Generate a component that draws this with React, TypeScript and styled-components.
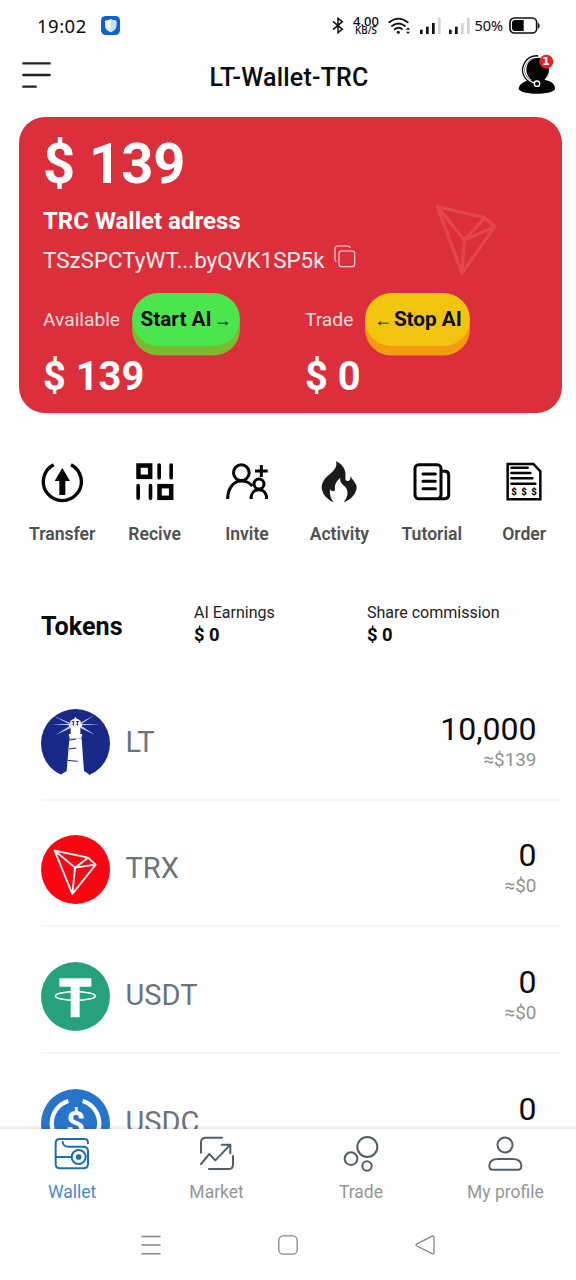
import React from 'react';
import styled, { createGlobalStyle } from 'styled-components';

const GlobalStyle = createGlobalStyle`
  *, *::before, *::after { box-sizing: border-box; }
  body { margin: 0; background: #fefefe; font-family: Roboto, "Liberation Sans", sans-serif; }
  svg { display: block; flex: none; }
`;

const Screen = styled.div`
  width: 576px;
  height: 1280px;
  display: flex;
  flex-direction: column;
  background: #fefefe;
  color: #0a0a0a;
  overflow: hidden;
`;

/* ---------- status bar ---------- */

const StatusBar = styled.div`
  height: 51px;
  flex: none;
  display: flex;
  align-items: center;
  justify-content: space-between;
  padding: 0 36px 0 37px;
`;

const StatusGroup = styled.div<{ $gap: number }>`
  display: flex;
  align-items: center;
  gap: ${(p) => p.$gap}px;
`;

const Clock = styled.span`
  font: 400 18.5px/24px "Noto Sans", sans-serif;
  letter-spacing: 0.5px;
  width: 51px;
`;

const NetSpeed = styled.div`
  display: flex;
  flex-direction: column;
  align-items: center;
  width: 27px;
  font-family: "Noto Sans", sans-serif;
  font-weight: 500;
  white-space: nowrap;
`;

const NetValue = styled.span`
  font-size: 13px;
  line-height: 10px;
`;

const NetUnit = styled.span`
  font-size: 9.8px;
  line-height: 10px;
`;

const BatteryText = styled.span`
  font: 400 14.5px/20px "Noto Sans", sans-serif;
  width: 30px;
  margin: -2px -4px 0 -4px;
  white-space: nowrap;
`;

/* ---------- header ---------- */

const Header = styled.header`
  height: 66px;
  flex: none;
  display: flex;
  align-items: flex-start;
  justify-content: space-between;
  padding: 3px 20px 0 22px;
`;

const MenuButton = styled.div`
  width: 38px;
  padding-top: 7px;
`;

const Title = styled.h1`
  margin: 0;
  font-size: 25px;
  line-height: 48px;
  letter-spacing: 0.2px;
  font-weight: 500;
`;

/* ---------- balance card ---------- */

const Card = styled.section`
  width: 543px;
  height: 296px;
  flex: none;
  margin-left: 19px;
  padding: 14px 24px 0;
  border-radius: 26px;
  background: #dc2f3c;
  color: #fff;
  position: relative;
`;

const Total = styled.div`
  font-size: 56px;
  line-height: 66px;
  font-weight: 700;
`;

const AddressLabel = styled.div`
  margin-top: 9px;
  font-size: 24px;
  line-height: 31px;
  font-weight: 700;
`;

const AddressRow = styled.div`
  display: flex;
  align-items: flex-start;
  gap: 9px;
  margin-top: 8px;
  height: 30px;
  font-size: 22.4px;
  line-height: 30px;
  color: #fdeeee;
`;

const Watermark = styled.div`
  position: absolute;
  left: 416px;
  top: 87px;
`;

const Funds = styled.div`
  display: grid;
  grid-template-columns: 262px 1fr;
  margin-top: 18.4px;
`;

const FundHead = styled.div`
  display: flex;
  align-items: flex-start;
  gap: 12px;
  height: 61.6px;
  line-height: 54px;
  font-size: 19.2px;
  color: #fbdcdc;
`;

const FundValue = styled.div`
  font-size: 39.8px;
  line-height: 43px;
  font-weight: 700;
`;

const PillButton = styled.button<{ $face: string; $edge: string; $width: number }>`
  width: ${(p) => p.$width}px;
  height: 53px;
  padding: 0;
  border: 0;
  border-radius: 28px;
  background: ${(p) => p.$face};
  box-shadow: 0 9.5px 0 ${(p) => p.$edge};
  display: flex;
  justify-content: center;
  gap: 2px;
  font: 700 20.7px/52px Roboto, sans-serif;
  color: #0a0a0a;
  white-space: nowrap;
`;

const Arrow = styled.span`
  font: 700 18px/54px "Liberation Sans", sans-serif;
`;

/* ---------- shortcuts ---------- */

const Shortcuts = styled.nav`
  display: grid;
  grid-template-columns: repeat(6, 92.4px);
  flex: none;
  margin: 48px 0 0 16px;
`;

const Shortcut = styled.div`
  display: flex;
  flex-direction: column;
  align-items: center;
  gap: 19px;
  font-size: 17.6px;
  line-height: 24px;
  font-weight: 600;
  color: #505050;
`;

/* ---------- tokens ---------- */

const Summary = styled.div`
  display: grid;
  grid-template-columns: 153px 173px 1fr;
  flex: none;
  margin: 57px 16px 0 41px;
`;

const SectionTitle = styled.h2`
  margin: 0;
  padding-top: 9px;
  font-size: 25.2px;
  line-height: 30px;
  font-weight: 700;
`;

const Stat = styled.div`
  font-size: 16px;
  line-height: 20px;
  color: #222;
`;

const StatValue = styled.div`
  font-size: 18.4px;
  line-height: 24px;
  font-weight: 700;
  color: #0a0a0a;
`;

const TokenList = styled.main`
  flex: 1;
  min-height: 0;
  overflow: hidden;
  margin: 27px 16px 0 41px;
`;

const TokenRow = styled.div`
  display: flex;
  height: 126.7px;
  padding: 34.7px 23.5px 0 0;
  border-bottom: 2px solid #f5f5f5;
`;

const TokenName = styled.div`
  flex: 1;
  margin-left: 15.5px;
  font-size: 29px;
  line-height: 67px;
  color: #6b747b;
`;

const TokenAmount = styled.div`
  display: flex;
  flex-direction: column;
  align-items: flex-end;
  font-size: 32px;
  line-height: 40px;
  color: #0a0a0a;
`;

const TokenFiat = styled.span`
  font-size: 18.9px;
  line-height: 21px;
  color: #939393;
`;

/* ---------- bottom bars ---------- */

const TabBar = styled.nav`
  flex: none;
  height: 81px;
  display: grid;
  grid-template-columns: repeat(4, 144.4px);
  padding-top: 7px;
  background: #fefefe;
  box-shadow: 0 -1px 4px rgba(0, 0, 0, 0.16);
  position: relative;
`;

const Tab = styled.div<{ $active?: boolean }>`
  display: flex;
  flex-direction: column;
  align-items: center;
  gap: 9px;
  font-size: 17.5px;
  line-height: 22px;
  color: ${(p) => (p.$active ? '#4788d0' : '#969696')};
`;

const SystemBar = styled.div`
  flex: none;
  height: 70px;
  display: flex;
  justify-content: center;
  gap: 117px;
  padding-top: 25px;
  background: #fefefe;
  position: relative;
`;

/* ---------- icons ---------- */

const ActionSvg = ({ children }: { children: React.ReactNode }) => (
  <svg width="42" height="42" viewBox="0 0 126 126" fill="none" stroke="#050505" strokeWidth="9">
    {children}
  </svg>
);

const TransferIcon = () => (
  <ActionSvg>
    <path d="M38 11A57 57 0 1 0 90 11" strokeWidth="10" />
    <path d="M64 21L87 60H73V102H55V60H41Z" fill="#050505" stroke="none" />
  </ActionSvg>
);

const ReceiveIcon = () => (
  <ActionSvg>
    <g strokeWidth="13.500">
      <rect x="13.500" y="13.500" width="35" height="34" />
      <rect x="76.500" y="75.500" width="35" height="35" />
    </g>
    <path d="M75.500 12V50M111.500 12V50M12.500 74V112M49.500 74V112" strokeWidth="11" strokeLinecap="round" />
  </ActionSvg>
);

const InviteIcon = () => (
  <ActionSvg>
    <circle cx="46" cy="35" r="23.500" />
    <path d="M5 114C5 80 24 60 46 60C62 60 72 66 79 75" />
    <circle cx="99" cy="69" r="15" />
    <path d="M75 114C75 97 85 86 99 86S122 97 122 114M106 12V48M87 30H125" />
  </ActionSvg>
);

const FlameIcon = () => (
  <ActionSvg>
    <path
      fill="#1b1b1b"
      stroke="none"
      d="M54 1C60 20 45 32 28 46C12 60 8 78 14 92C20 108 32 116 47 124C38 112 34 100 36 84C42 94 51 92 51 84C49 70 56 60 67 50C64 62 72 68 80 76C92 88 92 106 77 124C100 116 114 98 116 80C117 66 102 58 98 44C98 56 94 61 88 60C78 58 84 48 82 34C79 18 67 6 54 1Z"
    />
  </ActionSvg>
);

const TutorialIcon = () => (
  <ActionSvg>
    <rect x="12" y="11" width="78" height="102" rx="11" />
    <path d="M90 31H102Q113 31 113 42V102Q113 113 102 113H81" />
    <path d="M36 39H73M36 61H73M36 83H73" strokeLinecap="round" />
  </ActionSvg>
);

const OrderIcon = () => (
  <ActionSvg>
    <path d="M14 9H91L112 31V115H14Z" strokeWidth="7.500" />
    <path d="M25 20H74M25 36H82M25 52H88M25 68H97" strokeWidth="7.500" strokeLinecap="round" />
    <g fill="#050505" stroke="none" fontSize="29" fontWeight="900" textAnchor="middle">
      <text x="33" y="102">$</text>
      <text x="63" y="102">$</text>
      <text x="93" y="102">$</text>
    </g>
  </ActionSvg>
);

const CoinSvg = ({ color, children }: { color: string; children: React.ReactNode }) => (
  <svg width="69" height="69" viewBox="0 0 207 207" fill="none" stroke="#fff">
    <circle cx="103.500" cy="103.500" r="103.500" fill={color} stroke="none" />
    {children}
  </svg>
);

const LighthouseCoin = () => (
  <CoinSvg color="#182987">
    <g fill="#fefefe" stroke="none">
      <path d="M85 90H122L129 186L144 196V213H61V196L77 186Z" />
      <path d="M83 75H124L121 89H86Z" />
      <path d="M89 52H118V75H89Z" />
      <path d="M84 46H123V53H84Z" />
      <path d="M88 46V36Q94 30 100 29L103 23L107 29Q113 30 119 36V46Z" />
      <path d="M90 48L36 20L88 42ZM88 49L30 46L88 44ZM90 48L44 78L96 54Z" opacity="0.75" />
      <path d="M117 48L161 18L117 42ZM118 49L177 46L118 44ZM117 48L162 78L112 54Z" opacity="0.75" />
    </g>
    <path d="M92 38H100M97 38V50M105 38H114M109 38V50" stroke="#182987" strokeWidth="3" />
    <path d="M84 93L104 91M84 120L106 117M80 154L110 157" stroke="#182987" strokeWidth="3" />
  </CoinSvg>
);

const TronCoin = () => (
  <CoinSvg color="#fb0512">
    <path
      d="M41 47L141 68L164 89L94 177ZM41 47L102 98L94 177M102 98L141 68M102 98L164 89"
      strokeWidth="5.500"
      strokeLinejoin="round"
    />
  </CoinSvg>
);

const TetherCoin = () => (
  <CoinSvg color="#26a17b">
    <path d="M55 49H151V74H116V166H89V74H55Z" fill="#fff" stroke="none" />
    <ellipse cx="103" cy="102" rx="60" ry="13" strokeWidth="4.500" />
  </CoinSvg>
);

const UsdCoin = () => (
  <CoinSvg color="#2775ca">
    <path d="M82 36A70 70 0 0 0 82 170M125 36A70 70 0 0 1 125 170" strokeWidth="13" />
    <text x="103.500" y="137" fill="#fff" stroke="none" fontSize="100" fontWeight="700" textAnchor="middle">
      $
    </text>
  </CoinSvg>
);

const TabSvg = ({ color = '#535d64', children }: { color?: string; children: React.ReactNode }) => (
  <svg
    width="36"
    height="36"
    viewBox="0 0 108 108"
    fill="none"
    stroke={color}
    strokeWidth="6"
    strokeLinecap="round"
    strokeLinejoin="round"
  >
    {children}
  </svg>
);

const WalletIcon = () => (
  <TabSvg color="#1b6fae">
    <path d="M102 22C102 12 98 9 92 9H18Q5 9 5 22V84Q5 97 18 97H88Q102 97 102 84V46Q102 32 88 32H42Q27 31 26 18" />
    <path d="M5 63H52" />
    <circle cx="74" cy="63" r="21" />
    <circle cx="74" cy="63" r="8.500" fill="#1b6fae" stroke="none" />
  </TabSvg>
);

const MarketIcon = () => (
  <TabSvg>
    <path d="M6 50V19Q6 5 20 5H69M30 99H88Q102 99 102 86V60" />
    <path d="M6 84L31 54L49 73L94 26M68 26H94V52" />
  </TabSvg>
);

const TradeIcon = () => (
  <TabSvg>
    <circle cx="73" cy="33" r="30" />
    <circle cx="24" cy="68" r="19" />
    <circle cx="72" cy="90" r="14" />
  </TabSvg>
);

const ProfileIcon = () => (
  <TabSvg>
    <circle cx="54" cy="27" r="22.500" />
    <path d="M7 89Q7 69 34 69H76Q103 69 103 89Q103 101 93 101H17Q7 101 7 89Z" />
  </TabSvg>
);

const ShieldIcon = () => (
  <svg width="19" height="19" viewBox="0 0 57 57">
    <rect width="57" height="57" rx="14" fill="#1261d0" />
    <path d="M29 9C35 13 41 14 46 14V28C46 39 38 45 29 49C20 45 12 39 12 28V14C17 14 23 13 29 9Z" fill="#f4f8ff" />
    <path d="M29 9C35 13 41 14 46 14V28C46 39 38 45 29 49Z" fill="#c9dbf5" />
  </svg>
);

const BluetoothIcon = () => (
  <svg width="12" height="17" viewBox="0 0 36 51" fill="none" stroke="#111" strokeWidth="4.500">
    <path d="M3 13L31 37L18 47V4L31 14L3 38" />
  </svg>
);

const WifiIcon = () => (
  <svg width="23" height="18" viewBox="0 0 69 54" fill="none" stroke="#111" strokeWidth="5.500" strokeLinecap="round">
    <path d="M4 16Q31 -6 59 16M12 27Q31 12 51 27M20 37Q31 28 42 36" />
    <circle cx="31" cy="46" r="4.500" fill="#111" stroke="none" />
    <path d="M54 38L60 31L66 38ZM54 44L60 51L66 44Z" fill="#111" stroke="none" />
  </svg>
);

const SignalIcon = ({ level }: { level: number }) => (
  <svg width="21" height="18" viewBox="0 0 63 54" strokeWidth="8">
    {[38, 29, 18, 2].map((top, i) => (
      <path key={top} d={`M${4 + i * 18} ${top}V51`} stroke={i < level ? '#111' : '#d4d4d4'} />
    ))}
  </svg>
);

const BatteryIcon = () => (
  <svg width="31" height="17" viewBox="0 0 93 51">
    <rect x="3" y="3" width="80" height="45" rx="13" fill="none" stroke="#111" strokeWidth="5" />
    <path d="M18 9H44V42H18Q9 42 9 33V18Q9 9 18 9Z" fill="#050505" />
    <path d="M87 17Q92 20 92 26T87 35Z" fill="#111" />
  </svg>
);

const MenuIcon = () => (
  <svg width="30" height="28" viewBox="0 0 90 84" stroke="#222" strokeWidth="7" strokeLinecap="round">
    <path d="M4 7H83M4 42H83M4 77H41" />
  </svg>
);

const SupportIcon = () => (
  <svg width="38" height="41" viewBox="0 0 114 123" fill="none">
    <path d="M2 106C2 88 22 80 38 78H78C96 80 112 88 111 106C100 124 14 124 2 106Z" fill="#050505" />
    <ellipse cx="59" cy="47" rx="34" ry="36" fill="#050505" />
    <path d="M40 70H80V90H40Z" fill="#050505" />
    <path d="M60 8A40 40 0 0 0 22 68Q32 84 50 88" stroke="#050505" strokeWidth="9" />
    <path d="M60 10A38 38 0 0 0 23 67Q33 82 50 87" stroke="#fff" strokeWidth="4" />
    <circle cx="57" cy="89" r="8" fill="#050505" stroke="#fff" strokeWidth="4" />
    <circle cx="85" cy="23" r="21" fill="#e3222b" />
    <text x="84" y="34" fill="#fff" fontFamily="DejaVu Sans" fontWeight="700" fontSize="32" textAnchor="middle">
      1
    </text>
  </svg>
);

const CopyIcon = () => (
  <svg width="22" height="23" viewBox="0 0 66 69" fill="none" stroke="#fbdcdc" strokeWidth="3.500">
    <rect x="15" y="18" width="47" height="47" rx="8" />
    <path d="M7 50Q3 47 3 41V12Q3 3 12 3H40Q46 3 49 8" />
  </svg>
);

const TronMark = () => (
  <svg width="62" height="72" viewBox="0 0 186 216" fill="none" stroke="#e3464c" strokeWidth="10" strokeLinejoin="round">
    <path d="M7 8L150 41L179 68L81 208ZM7 8L88 108L81 208M88 108L150 41M88 108L179 68" />
  </svg>
);

const RecentsIcon = () => (
  <svg width="20" height="20" viewBox="0 0 20 20" stroke="#858585" strokeWidth="1.4">
    <path d="M0.500 1.500H19.500M0.500 10H19.500M0.500 18.700H19.500" />
  </svg>
);

const HomeIcon = () => (
  <svg width="20" height="20" viewBox="0 0 20 20" fill="none" stroke="#858585" strokeWidth="1.3">
    <rect x="0.800" y="0.800" width="18.400" height="18.400" rx="4.500" />
  </svg>
);

const BackIcon = () => (
  <svg width="20" height="20" viewBox="0 0 20 20" fill="none" stroke="#858585" strokeWidth="1.300">
    <path d="M1.500 9.200L17 1.200Q19 0.500 19 2.500V17.500Q19 19.500 17 18.700L1.500 10.800Q0.500 10 1.500 9.200Z" />
  </svg>
);

/* ---------- data ---------- */

const shortcuts = [
  { label: 'Transfer', Icon: TransferIcon },
  { label: 'Recive', Icon: ReceiveIcon },
  { label: 'Invite', Icon: InviteIcon },
  { label: 'Activity', Icon: FlameIcon },
  { label: 'Tutorial', Icon: TutorialIcon },
  { label: 'Order', Icon: OrderIcon },
];

const tokens = [
  { name: 'LT', amount: '10,000', fiat: '≈$139', Icon: LighthouseCoin },
  { name: 'TRX', amount: '0', fiat: '≈$0', Icon: TronCoin },
  { name: 'USDT', amount: '0', fiat: '≈$0', Icon: TetherCoin },
  { name: 'USDC', amount: '0', fiat: '≈$0', Icon: UsdCoin },
];

const tabs = [
  { label: 'Wallet', Icon: WalletIcon },
  { label: 'Market', Icon: MarketIcon },
  { label: 'Trade', Icon: TradeIcon },
  { label: 'My profile', Icon: ProfileIcon },
];

export default function App() {
  return (
    <Screen>
      <GlobalStyle />
      <StatusBar>
        <StatusGroup $gap={13}>
          <Clock>19:02</Clock>
          <ShieldIcon />
        </StatusGroup>
        <StatusGroup $gap={8.5}>
          <BluetoothIcon />
          <NetSpeed>
            <NetValue>4.00</NetValue>
            <NetUnit>KB/S</NetUnit>
          </NetSpeed>
          <WifiIcon />
          <SignalIcon level={3} />
          <SignalIcon level={2} />
          <BatteryText>50%</BatteryText>
          <BatteryIcon />
        </StatusGroup>
      </StatusBar>

      <Header>
        <MenuButton>
          <MenuIcon />
        </MenuButton>
        <Title>LT-Wallet-TRC</Title>
        <SupportIcon />
      </Header>

      <Card>
        <Total>$ 139</Total>
        <AddressLabel>TRC Wallet adress</AddressLabel>
        <AddressRow>
          TSzSPCTyWT...byQVK1SP5k
          <CopyIcon />
        </AddressRow>
        <Watermark>
          <TronMark />
        </Watermark>
        <Funds>
          <div>
            <FundHead>
              Available
              <PillButton $face="#4be54d" $edge="#7aba2f" $width={108}>
                Start AI<Arrow>→</Arrow>
              </PillButton>
            </FundHead>
            <FundValue>$ 139</FundValue>
          </div>
          <div>
            <FundHead>
              Trade
              <PillButton $face="#f1c40f" $edge="#f39c12" $width={105}>
                <Arrow>←</Arrow>Stop AI
              </PillButton>
            </FundHead>
            <FundValue>$ 0</FundValue>
          </div>
        </Funds>
      </Card>

      <Shortcuts>
        {shortcuts.map(({ label, Icon }) => (
          <Shortcut key={label}>
            <Icon />
            {label}
          </Shortcut>
        ))}
      </Shortcuts>

      <Summary>
        <SectionTitle>Tokens</SectionTitle>
        <Stat>
          AI Earnings
          <StatValue>$ 0</StatValue>
        </Stat>
        <Stat>
          Share commission
          <StatValue>$ 0</StatValue>
        </Stat>
      </Summary>

      <TokenList>
        {tokens.map(({ name, amount, fiat, Icon }) => (
          <TokenRow key={name}>
            <Icon />
            <TokenName>{name}</TokenName>
            <TokenAmount>
              {amount}
              <TokenFiat>{fiat}</TokenFiat>
            </TokenAmount>
          </TokenRow>
        ))}
      </TokenList>

      <TabBar>
        {tabs.map(({ label, Icon }, i) => (
          <Tab key={label} $active={i === 0}>
            <Icon />
            {label}
          </Tab>
        ))}
      </TabBar>

      <SystemBar>
        <RecentsIcon />
        <HomeIcon />
        <BackIcon />
      </SystemBar>
    </Screen>
  );
}
